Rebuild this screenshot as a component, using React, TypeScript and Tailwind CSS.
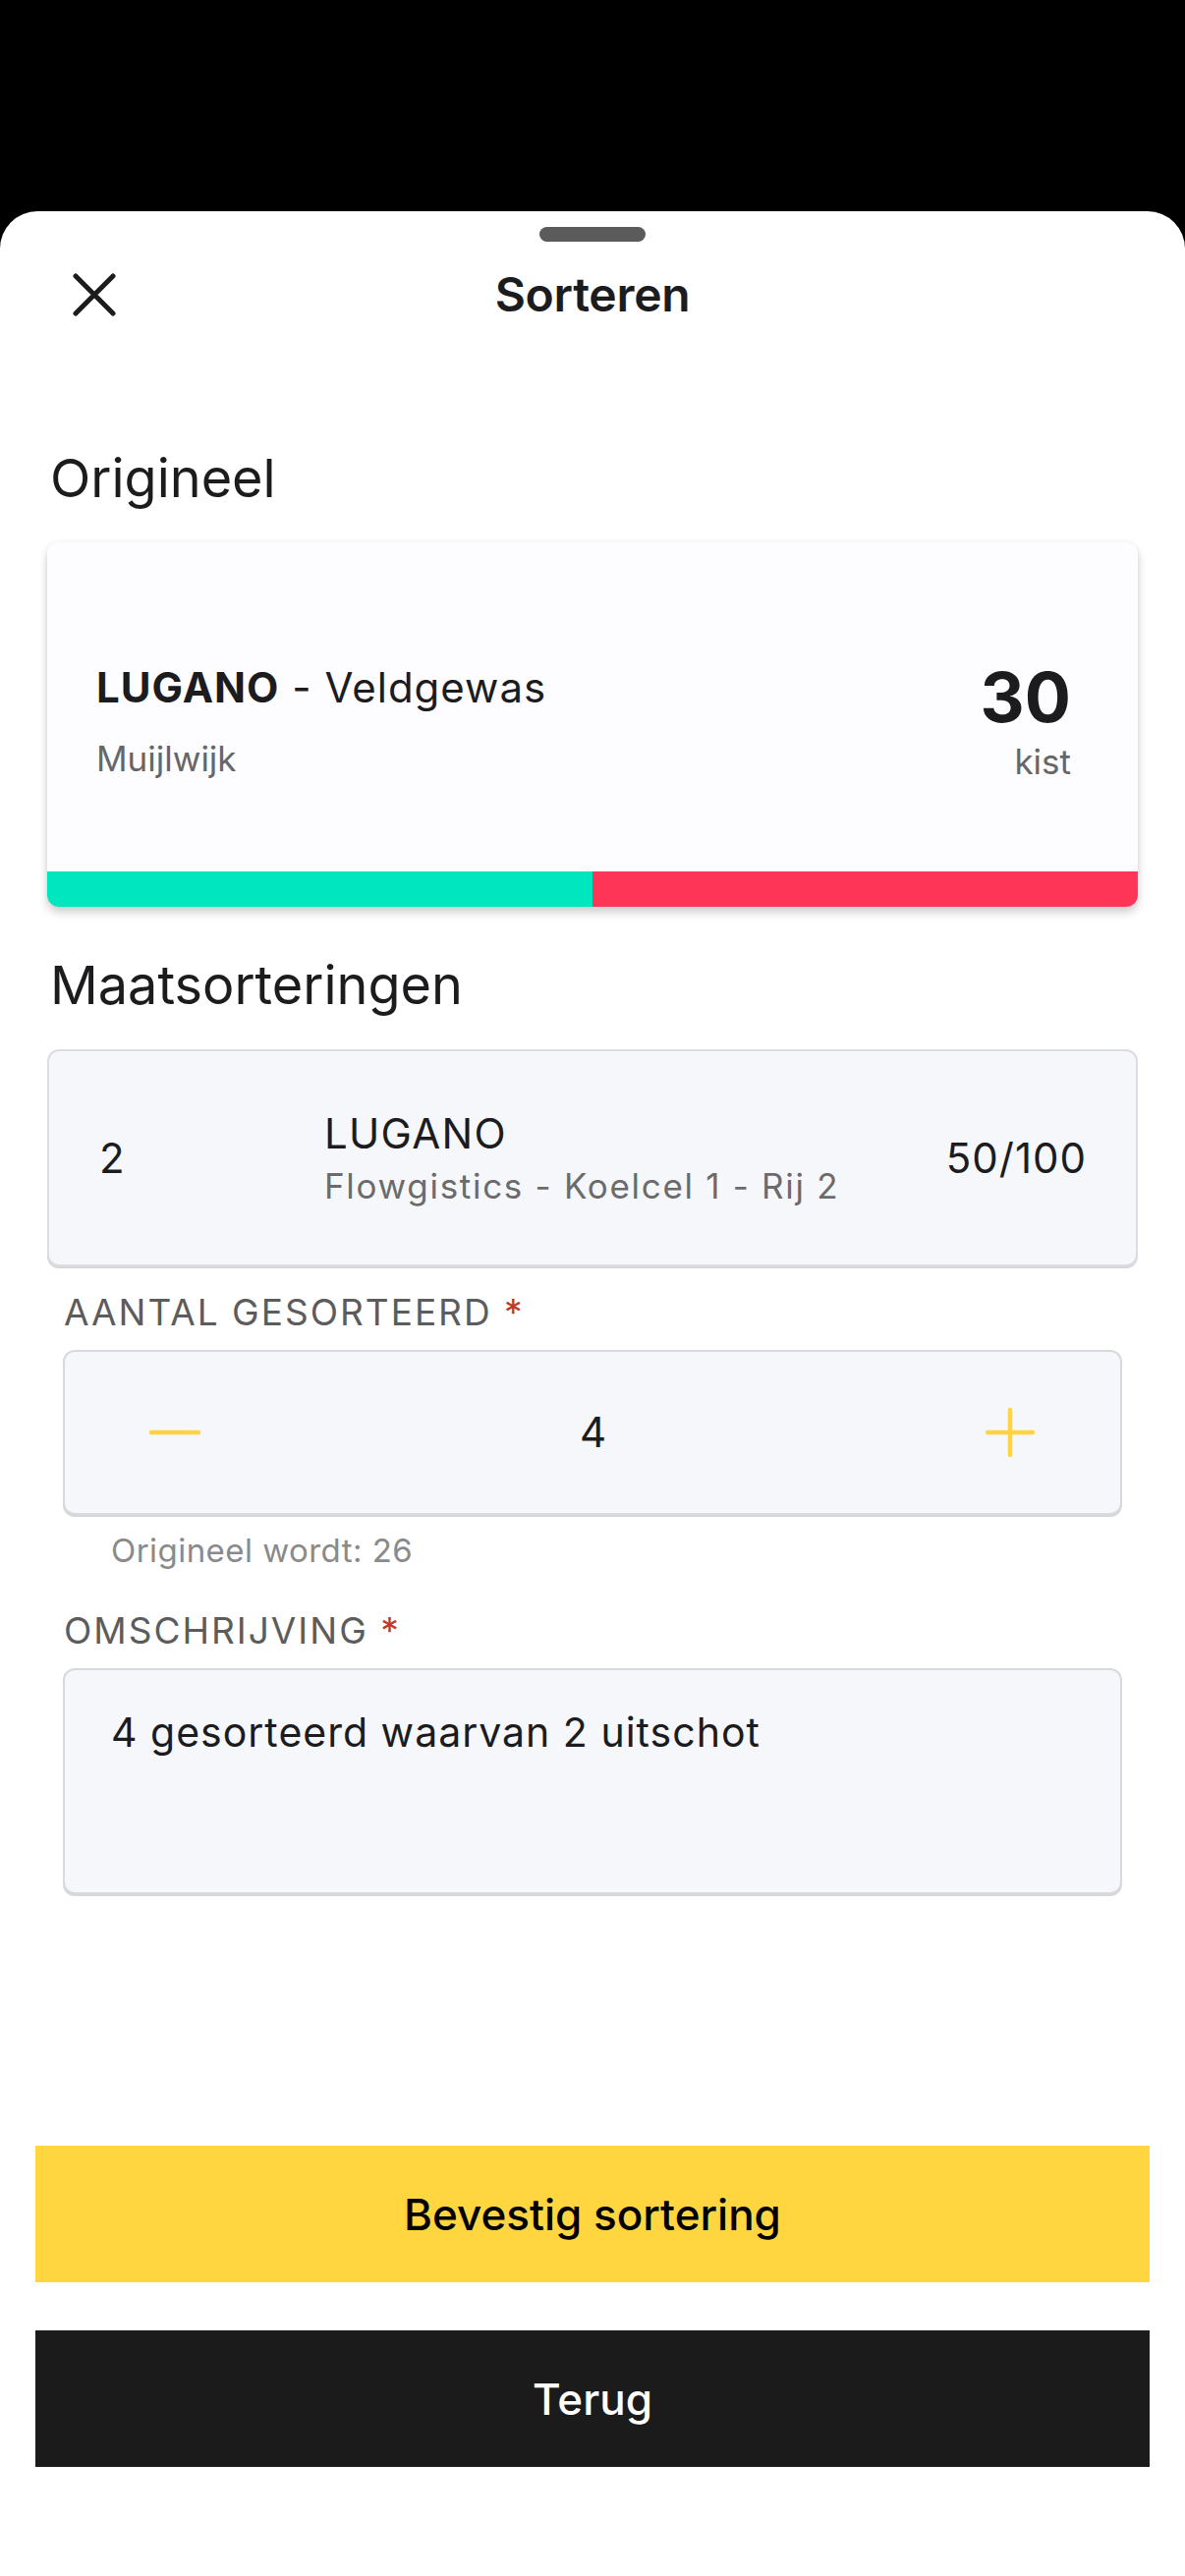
import React from "react";

const font = { fontFamily: "Inter, 'Noto Sans', sans-serif" };

function CloseIcon() {
  return (
    <svg width="44" height="44" viewBox="0 0 44 44" fill="none">
      <path d="M3 3L41 41M41 3L3 41" stroke="#1c1c1e" strokeWidth="5" strokeLinecap="round" />
    </svg>
  );
}

function MinusIcon() {
  return (
    <svg width="52" height="52" viewBox="0 0 52 52" fill="none">
      <path d="M2 26H50" stroke="#ffd43f" strokeWidth="4.5" strokeLinecap="round" />
    </svg>
  );
}

function PlusIcon() {
  return (
    <svg width="50" height="50" viewBox="0 0 50 50" fill="none">
      <path d="M2 25H48M25 2V48" stroke="#ffd43f" strokeWidth="4.5" strokeLinecap="round" />
    </svg>
  );
}

function FieldLabel({ children }: { children: React.ReactNode }) {
  return (
    <div className="text-[37px] leading-[44px] text-[#5c5c5c] uppercase tracking-[2px]">
      {children} <span className="text-[#c0392b]">*</span>
    </div>
  );
}

export default function App() {
  const done = 50;
  return (
    <div className="w-[1206px] h-[2622px] bg-black flex flex-col" style={font}>
      <div className="h-[215px] shrink-0" />
      <div className="flex-1 bg-white rounded-t-[38px] flex flex-col">
        {/* handle */}
        <div className="mt-[16px] mx-auto w-[108px] h-[15px] rounded-full bg-[#5b5b5b]" />

        {/* header */}
        <div className="h-[108px] grid grid-cols-[1fr_auto_1fr] items-center">
          <div className="pl-[74px] flex items-center">
            <CloseIcon />
          </div>
          <div className="text-[48px] font-semibold text-[#1c1c1e] tracking-[-0.3px]">Sorteren</div>
          <div />
        </div>

        <div className="px-[48px]">
          <h2 className="mt-[100px] text-[54px] leading-[66px] text-[#1c1c1e] pl-[3px]">Origineel</h2>

          {/* original card */}
          <div className="mt-[32px] h-[371px] rounded-[12px] bg-[#fdfcff] shadow-[0_6px_10px_rgba(0,0,0,0.18),0_0_6px_rgba(0,0,0,0.06)] overflow-hidden flex flex-col">
            <div className="flex-1 flex justify-between pt-[122px] pl-[50px] pr-[68px]">
              <div className="flex flex-col">
                <div className="text-[42px] leading-[52px] text-[#1c1c1e] tracking-[1px]">
                  <span className="font-bold">LUGANO</span> - Veldgewas
                </div>
                <div className="mt-[24px] text-[35px] leading-[44px] text-[#666666]">Muijlwijk</div>
              </div>
              <div className="flex flex-col items-end">
                <div className="text-[70px] leading-[72px] font-bold text-[#1c1c1e]">30</div>
                <div className="mt-[7px] text-[35px] leading-[44px] text-[#666666]">kist</div>
              </div>
            </div>
            <div className="h-[36px] flex">
              <div className="bg-[#00e6be]" style={{ width: `${done}%` }} />
              <div className="flex-1 bg-[#ff3557]" />
            </div>
          </div>

          <h2 className="mt-[48px] text-[54px] leading-[64px] text-[#1c1c1e] pl-[3px]">Maatsorteringen</h2>

          {/* size sorting row */}
          <div className="mt-[33px] h-[221px] rounded-[12px] bg-[#f6f7fb] border-2 border-[#dcdde1] shadow-[0_2px_0_#d6d7db] flex items-center pl-[51px] pr-[50px]">
            <div className="w-[229px] text-[42px] leading-[52px] text-[#1c1c1e]">2</div>
            <div className="flex-1 flex flex-col">
              <div className="text-[42px] leading-[50px] text-[#1c1c1e] tracking-[1.3px]">LUGANO</div>
              <div className="mt-[6px] text-[35px] leading-[44px] text-[#6b6b6b] tracking-[1.7px]">Flowgistics - Koelcel 1 - Rij 2</div>
            </div>
            <div className="text-[42px] leading-[52px] text-[#1c1c1e] tracking-[1px]">50/100</div>
          </div>
        </div>

        <div className="px-[64px]">
          <div className="mt-[25px] pl-[1px]">
            <FieldLabel>Aantal gesorteerd</FieldLabel>
          </div>
          <div className="mt-[16px] h-[168px] rounded-[12px] bg-[#f6f7fb] border-2 border-[#d8d9dd] shadow-[0_2px_0_#d6d7db] flex items-center justify-between pl-[86px] pr-[87px]">
            <MinusIcon />
            <div className="text-[42px] leading-[52px] text-[#1c1c1e]">4</div>
            <PlusIcon />
          </div>
          <div className="mt-[16px] pl-[49px] text-[33px] leading-[40px] text-[#8a8a8a] tracking-[0.45px]">Origineel wordt: 26</div>

          <div className="mt-[40px] pl-[1px]">
            <FieldLabel>Omschrijving</FieldLabel>
          </div>
          <div className="mt-[16px] h-[230px] rounded-[12px] bg-[#f6f7fb] border-2 border-[#d8d9dd] shadow-[0_2px_0_#d6d7db] pt-[38px] pl-[47px]">
            <div className="text-[41px] leading-[50px] text-[#1c1c1e] tracking-[1px]">4 gesorteerd waarvan 2 uitschot</div>
          </div>
        </div>

        <div className="flex-1" />

        {/* buttons */}
        <div className="px-[36px] pb-[111px] flex flex-col gap-[49px]">
          <button className="h-[139px] bg-[#ffd540] text-[44px] font-medium text-black flex items-center justify-center">
            Bevestig sortering
          </button>
          <button className="h-[139px] bg-[#1b1b1b] text-[44px] font-medium text-white flex items-center justify-center">
            Terug
          </button>
        </div>
      </div>
    </div>
  );
}
